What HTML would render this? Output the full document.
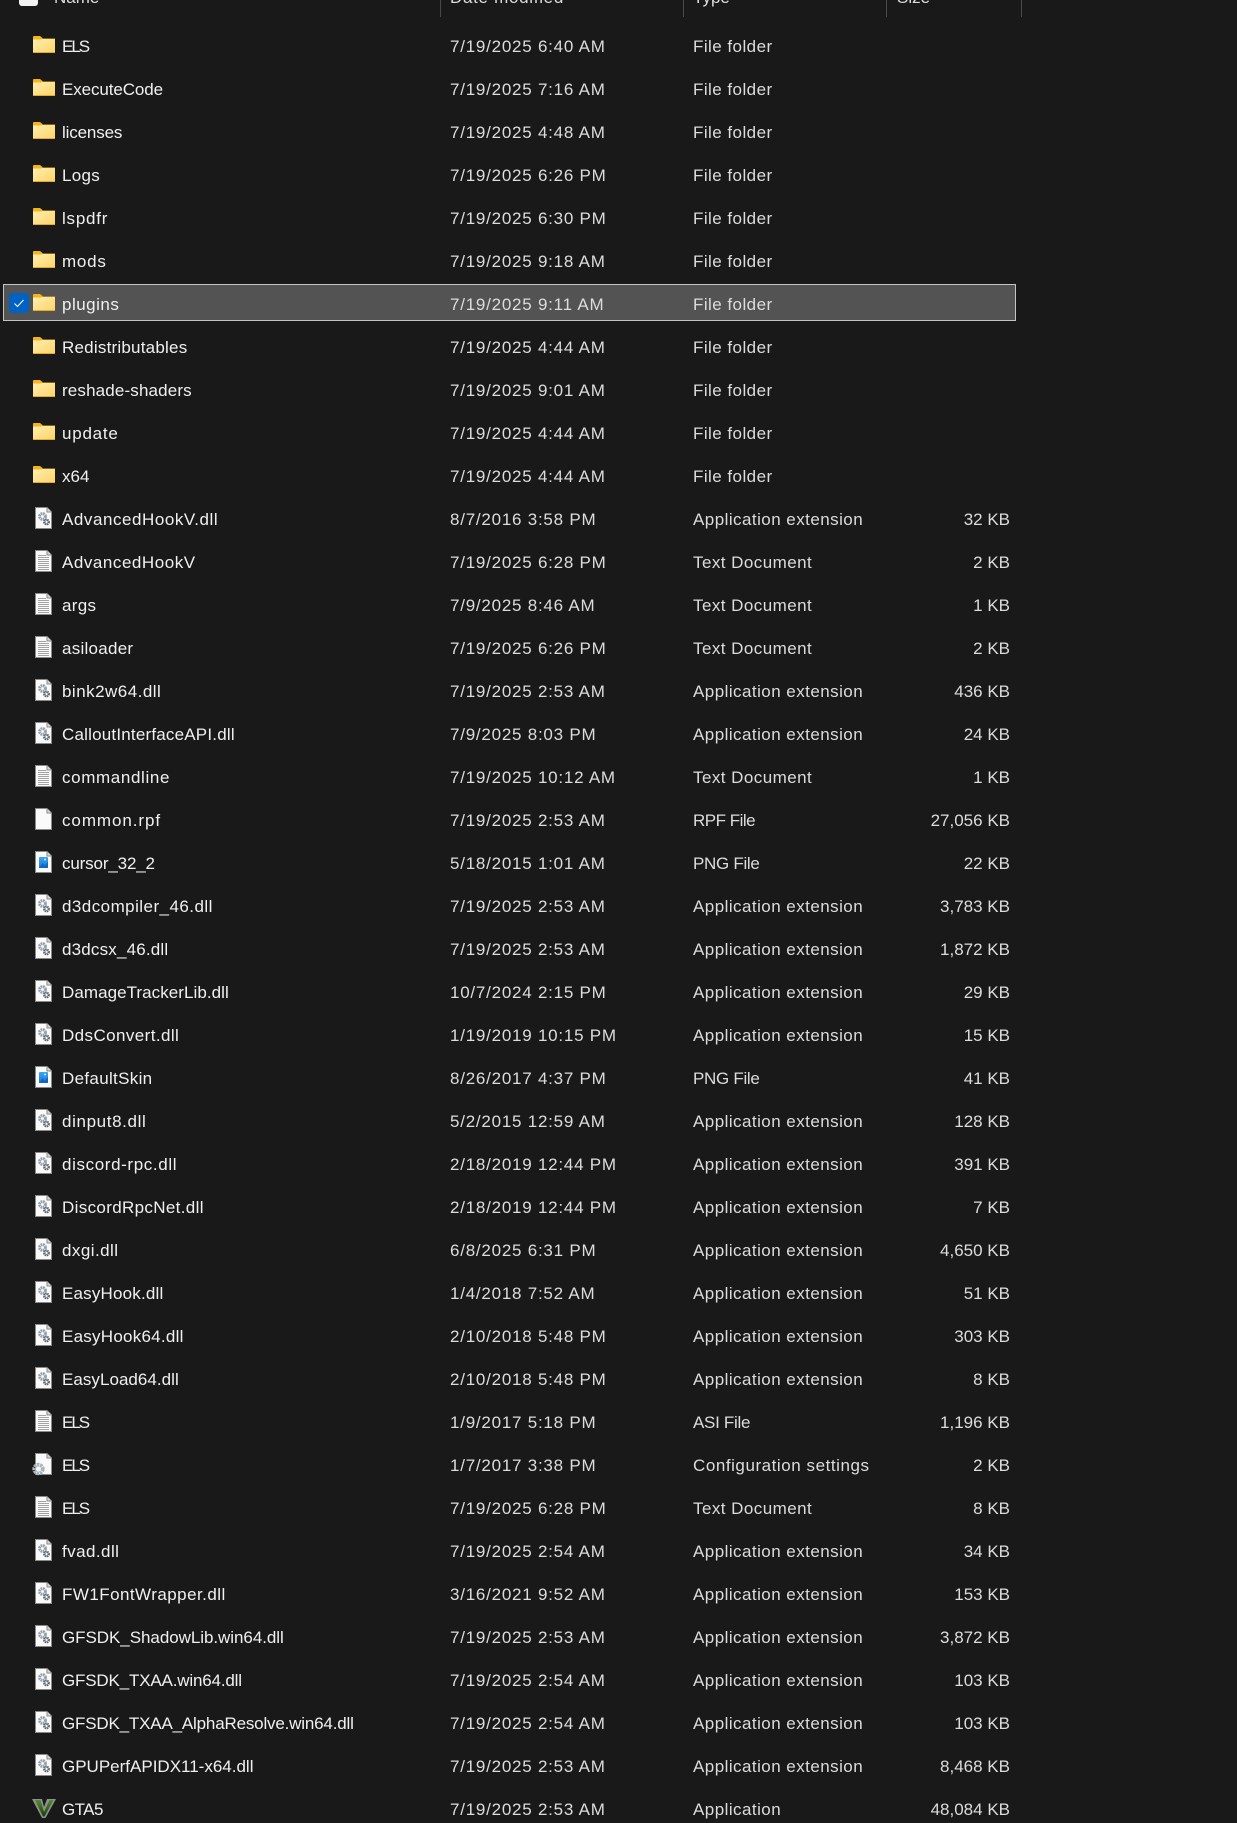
<!DOCTYPE html>
<html><head><meta charset="utf-8"><style>
html,body{margin:0;padding:0;background:#191919;width:1237px;height:1823px;overflow:hidden}
body{position:relative;font-family:"Liberation Sans",sans-serif;font-size:17px;color:#f0f0f0}
#l{position:absolute;left:0;top:25px;width:1237px}
#l>div{position:relative;height:43px;line-height:43px;white-space:nowrap}
#l svg{position:absolute;left:30px;top:7px;width:26px;height:26px}
#l b{font-weight:400;position:absolute;left:62px;top:0}
#l i{font-style:normal;position:absolute;left:450px;top:0;color:#dcdcdc;letter-spacing:.76px}
#l u{text-decoration:none;position:absolute;left:693px;top:0;color:#dcdcdc;letter-spacing:.45px}
#l s{text-decoration:none;position:absolute;right:227px;top:0;color:#dcdcdc;letter-spacing:0}
.h{position:absolute;top:-12px;line-height:20px;color:#dcdcdc}
.c{position:absolute;top:0;width:1px;height:17px;background:#4a4a4a}
#sel{position:absolute;left:3px;top:284px;width:1013px;height:37px;box-sizing:border-box;background:#535353;border:1px solid #c4c4c4}
#chk{position:absolute;left:9px;top:293px;width:20px;height:20px;border-radius:4px;background:#0063c4}
</style></head><body>
<svg width="0" height="0" style="position:absolute"><defs>
<linearGradient id="fg" x1="0" y1="0" x2="1" y2="1"><stop offset="0" stop-color="#ffeeb0"/><stop offset="1" stop-color="#fdd368"/></linearGradient>
<linearGradient id="vg" x1="0" y1="0" x2="0" y2="1"><stop offset="0" stop-color="#4f8f2a"/><stop offset="1" stop-color="#173a0e"/></linearGradient>
<linearGradient id="bg" x1="0" y1="0" x2="0" y2="1"><stop offset="0" stop-color="#3aa6f0"/><stop offset="1" stop-color="#1a78d8"/></linearGradient>
<symbol id="F" viewBox="0 0 26 26"><path d="M3 5Q3 4 4 4H10L12.500 6V8H3Z" fill="#f4b41c"/><path d="M12 6.500H25V8H12Z" fill="#e9ab1f"/><path d="M3 7.500H11L12.500 7H25V21H3Z" fill="url(#fg)"/><path d="M3 20H25V21H3Z" fill="#e8ab22"/></symbol>
<symbol id="P" viewBox="0 0 26 26"><path d="M5.500 2.500H17L21.500 7V23.500H5.500Z" fill="#fafafa" stroke="#8a8a8a"/><path d="M17 2.500V7H21.500" fill="#d8d8d8" stroke="#8a8a8a"/></symbol>
<symbol id="D" viewBox="0 0 26 26"><use href="#P"/><circle cx="12.500" cy="11.500" r="2.900" fill="none" stroke="#97a1ab" stroke-width="3" stroke-dasharray="1.700 .6"/><circle cx="16.500" cy="17" r="2.200" fill="none" stroke="#5f6973" stroke-width="2.400" stroke-dasharray="1.300 .5"/></symbol>
<symbol id="T" viewBox="0 0 26 26"><use href="#P"/><path d="M8 7.500H16M8 9.500H19M8 11.500H19M8 13.500H19M8 15.500H19M8 17.500H19M8 19.500H19M8 21.500H19" stroke="#a3a3a3" stroke-width="1"/></symbol>
<symbol id="I" viewBox="0 0 26 26"><rect x="9" y="8" width="9" height="11" rx="1" fill="url(#bg)"/><path d="M9 19L12.500 14L15 16.500L18 13V19Z" fill="#1566c4"/><circle cx="15" cy="10.500" r="1" fill="#cfe9fc"/></symbol>
<symbol id="G" viewBox="0 0 26 26"><use href="#P"/><use href="#I"/></symbol>
<symbol id="S" viewBox="0 0 26 26"><use href="#P"/><circle cx="8.500" cy="18" r="4.300" fill="none" stroke="#aab4bd" stroke-width="3.800" stroke-dasharray="2.400 .7"/></symbol>
<symbol id="V" viewBox="0 0 26 26"><path d="M2 4H12L14 12L17 4H26L15.500 23H12Z" fill="#8f8f8f"/><path d="M5 5H10.500L14 17L19.500 5H23.500L14.500 21.500H13Z" fill="url(#vg)"/></symbol>
</defs></svg>
<div style="position:absolute;left:18.500px;top:-6px;width:19px;height:11.500px;border-radius:3px;background:#f2f2f2"></div>
<div class="h" style="left:54px">Name</div>
<div class="h" style="left:450px;letter-spacing:.7px">Date modified</div>
<div class="h" style="left:693px">Type</div>
<div class="h" style="left:897px">Size</div>
<div class="c" style="left:440px"></div><div class="c" style="left:683px"></div><div class="c" style="left:886px"></div><div class="c" style="left:1021px"></div>
<div id="sel"></div>
<div id="chk"><svg width="20" height="20" viewBox="0 0 20 20" style="display:block"><path d="M5.500 10.500L8.500 13.500L14.500 7" fill="none" stroke="#fff" stroke-width="1"/></svg></div>
<div id="l">
<div><svg><use href="#F"/></svg><b style="letter-spacing:-2px">ELS</b><i>7/19/2025 6:40 AM</i><u>File folder</u></div>
<div><svg><use href="#F"/></svg><b style="letter-spacing:-.1px">ExecuteCode</b><i>7/19/2025 7:16 AM</i><u>File folder</u></div>
<div><svg><use href="#F"/></svg><b style="letter-spacing:-.15px">licenses</b><i>7/19/2025 4:48 AM</i><u>File folder</u></div>
<div><svg><use href="#F"/></svg><b style="letter-spacing:.3px">Logs</b><i>7/19/2025 6:26 PM</i><u>File folder</u></div>
<div><svg><use href="#F"/></svg><b style="letter-spacing:.77px">lspdfr</b><i>7/19/2025 6:30 PM</i><u>File folder</u></div>
<div><svg><use href="#F"/></svg><b style="letter-spacing:.77px">mods</b><i>7/19/2025 9:18 AM</i><u>File folder</u></div>
<div><svg><use href="#F"/></svg><b style="letter-spacing:.5px">plugins</b><i>7/19/2025 9:11 AM</i><u>File folder</u></div>
<div><svg><use href="#F"/></svg><b style="letter-spacing:.22px">Redistributables</b><i>7/19/2025 4:44 AM</i><u>File folder</u></div>
<div><svg><use href="#F"/></svg><b style="letter-spacing:.15px">reshade-shaders</b><i>7/19/2025 9:01 AM</i><u>File folder</u></div>
<div><svg><use href="#F"/></svg><b style="letter-spacing:.77px">update</b><i>7/19/2025 4:44 AM</i><u>File folder</u></div>
<div><svg><use href="#F"/></svg><b>x64</b><i>7/19/2025 4:44 AM</i><u>File folder</u></div>
<div><svg><use href="#D"/></svg><b style="letter-spacing:.55px">AdvancedHookV.dll</b><i>8/7/2016 3:58 PM</i><u>Application extension</u><s>32 KB</s></div>
<div><svg><use href="#T"/></svg><b style="letter-spacing:.54px">AdvancedHookV</b><i>7/19/2025 6:28 PM</i><u>Text Document</u><s>2 KB</s></div>
<div><svg><use href="#T"/></svg><b style="letter-spacing:.3px">args</b><i>7/9/2025 8:46 AM</i><u>Text Document</u><s>1 KB</s></div>
<div><svg><use href="#T"/></svg><b style="letter-spacing:.26px">asiloader</b><i>7/19/2025 6:26 PM</i><u>Text Document</u><s>2 KB</s></div>
<div><svg><use href="#D"/></svg><b style="letter-spacing:.48px">bink2w64.dll</b><i>7/19/2025 2:53 AM</i><u>Application extension</u><s>436 KB</s></div>
<div><svg><use href="#D"/></svg><b style="letter-spacing:.2px">CalloutInterfaceAPI.dll</b><i>7/9/2025 8:03 PM</i><u>Application extension</u><s>24 KB</s></div>
<div><svg><use href="#T"/></svg><b style="letter-spacing:.63px">commandline</b><i>7/19/2025 10:12 AM</i><u>Text Document</u><s>1 KB</s></div>
<div><svg><use href="#P"/></svg><b style="letter-spacing:.93px">common.rpf</b><i>7/19/2025 2:53 AM</i><u style="letter-spacing:-.5px">RPF File</u><s>27,056 KB</s></div>
<div><svg><use href="#G"/></svg><b style="letter-spacing:-.15px">cursor_32_2</b><i>5/18/2015 1:01 AM</i><u style="letter-spacing:-.3px">PNG File</u><s>22 KB</s></div>
<div><svg><use href="#D"/></svg><b style="letter-spacing:.45px">d3dcompiler_46.dll</b><i>7/19/2025 2:53 AM</i><u>Application extension</u><s>3,783 KB</s></div>
<div><svg><use href="#D"/></svg><b style="letter-spacing:.18px">d3dcsx_46.dll</b><i>7/19/2025 2:53 AM</i><u>Application extension</u><s>1,872 KB</s></div>
<div><svg><use href="#D"/></svg><b style="letter-spacing:.06px">DamageTrackerLib.dll</b><i>10/7/2024 2:15 PM</i><u>Application extension</u><s>29 KB</s></div>
<div><svg><use href="#D"/></svg><b style="letter-spacing:.41px">DdsConvert.dll</b><i>1/19/2019 10:15 PM</i><u>Application extension</u><s>15 KB</s></div>
<div><svg><use href="#G"/></svg><b style="letter-spacing:.32px">DefaultSkin</b><i>8/26/2017 4:37 PM</i><u style="letter-spacing:-.3px">PNG File</u><s>41 KB</s></div>
<div><svg><use href="#D"/></svg><b style="letter-spacing:.63px">dinput8.dll</b><i>5/2/2015 12:59 AM</i><u>Application extension</u><s>128 KB</s></div>
<div><svg><use href="#D"/></svg><b style="letter-spacing:.62px">discord-rpc.dll</b><i>2/18/2019 12:44 PM</i><u>Application extension</u><s>391 KB</s></div>
<div><svg><use href="#D"/></svg><b style="letter-spacing:.34px">DiscordRpcNet.dll</b><i>2/18/2019 12:44 PM</i><u>Application extension</u><s>7 KB</s></div>
<div><svg><use href="#D"/></svg><b style="letter-spacing:.44px">dxgi.dll</b><i>6/8/2025 6:31 PM</i><u>Application extension</u><s>4,650 KB</s></div>
<div><svg><use href="#D"/></svg><b style="letter-spacing:.19px">EasyHook.dll</b><i>1/4/2018 7:52 AM</i><u>Application extension</u><s>51 KB</s></div>
<div><svg><use href="#D"/></svg><b style="letter-spacing:.25px">EasyHook64.dll</b><i>2/10/2018 5:48 PM</i><u>Application extension</u><s>303 KB</s></div>
<div><svg><use href="#D"/></svg><b style="letter-spacing:.04px">EasyLoad64.dll</b><i>2/10/2018 5:48 PM</i><u>Application extension</u><s>8 KB</s></div>
<div><svg><use href="#T"/></svg><b style="letter-spacing:-2px">ELS</b><i>1/9/2017 5:18 PM</i><u style="letter-spacing:-.3px">ASI File</u><s>1,196 KB</s></div>
<div><svg><use href="#S"/></svg><b style="letter-spacing:-2px">ELS</b><i>1/7/2017 3:38 PM</i><u style="letter-spacing:.55px">Configuration settings</u><s>2 KB</s></div>
<div><svg><use href="#T"/></svg><b style="letter-spacing:-2px">ELS</b><i>7/19/2025 6:28 PM</i><u>Text Document</u><s>8 KB</s></div>
<div><svg><use href="#D"/></svg><b style="letter-spacing:.44px">fvad.dll</b><i>7/19/2025 2:54 AM</i><u>Application extension</u><s>34 KB</s></div>
<div><svg><use href="#D"/></svg><b style="letter-spacing:.45px">FW1FontWrapper.dll</b><i>3/16/2021 9:52 AM</i><u>Application extension</u><s>153 KB</s></div>
<div><svg><use href="#D"/></svg><b style="letter-spacing:-.05px">GFSDK_ShadowLib.win64.dll</b><i>7/19/2025 2:53 AM</i><u>Application extension</u><s>3,872 KB</s></div>
<div><svg><use href="#D"/></svg><b style="letter-spacing:-.17px">GFSDK_TXAA.win64.dll</b><i>7/19/2025 2:54 AM</i><u>Application extension</u><s>103 KB</s></div>
<div><svg><use href="#D"/></svg><b style="letter-spacing:-.18px">GFSDK_TXAA_AlphaResolve.win64.dll</b><i>7/19/2025 2:54 AM</i><u>Application extension</u><s>103 KB</s></div>
<div><svg><use href="#D"/></svg><b>GPUPerfAPIDX11-x64.dll</b><i>7/19/2025 2:53 AM</i><u>Application extension</u><s>8,468 KB</s></div>
<div><svg><use href="#V"/></svg><b style="letter-spacing:-.58px">GTA5</b><i>7/19/2025 2:53 AM</i><u>Application</u><s>48,084 KB</s></div>
</div>
</body></html>
